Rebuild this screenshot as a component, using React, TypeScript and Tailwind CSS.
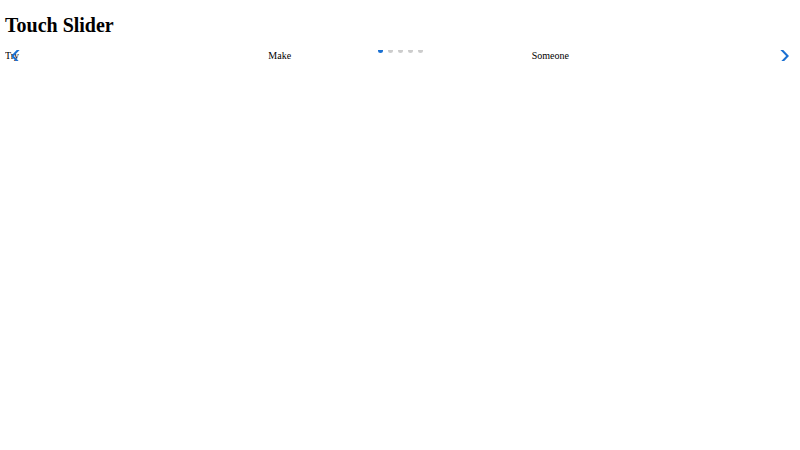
import { useState } from "react";
import clsx from "clsx";

const slides = ["Try", "Make", "Someone"];
const pages = [0, 1, 2, 3, 4];

const Chevron: React.FC<{ flip?: boolean }> = ({ flip }) => (
  <svg
    viewBox="0 0 17 28"
    className={clsx("h-7 w-full shrink-0", flip && "rotate-180")}
    fill="none"
    stroke="currentColor"
    strokeWidth="2.2"
    aria-hidden="true"
  >
    <path d="M2.5 0.5 L15.5 14 L2.5 27.5" />
  </svg>
);

const TouchSlider: React.FC = () => {
  const [active, setActive] = useState(0);

  return (
    <section className="relative overflow-hidden">
      <ul className="flex">
        {slides.map((text) => (
          <li key={text} className="flex-1">
            {text}
          </li>
        ))}
      </ul>

      <button
        type="button"
        aria-label="Previous slide"
        className="absolute inset-y-0 left-1.5 flex w-4 items-center text-[#1a70d2]"
        onClick={() => setActive(Math.max(active - 1, 0))}
      >
        <Chevron flip />
      </button>
      <button
        type="button"
        aria-label="Next slide"
        className="absolute inset-y-0 right-1.5 flex w-4 items-center text-[#1a70d2]"
        onClick={() => setActive(Math.min(active + 1, pages.length - 1))}
      >
        <Chevron />
      </button>

      <div className="absolute inset-x-0 bottom-2 flex justify-center gap-[5px]">
        {pages.map((page) => (
          <button
            key={page}
            type="button"
            aria-label={`Go to slide ${page + 1}`}
            className={clsx(
              "size-[5px] rounded-full",
              page === active ? "bg-[#1a70d2]" : "bg-black/20"
            )}
            onClick={() => setActive(page)}
          />
        ))}
      </div>
    </section>
  );
};

const App: React.FC = () => {
  return (
    <main className="px-[5px] font-['Liberation_Serif',serif] text-[10px] leading-[11px] text-black">
      <h1 className="py-[13px] text-[20px] leading-6 font-bold">Touch Slider</h1>
      <TouchSlider />
    </main>
  );
};

export default App;
